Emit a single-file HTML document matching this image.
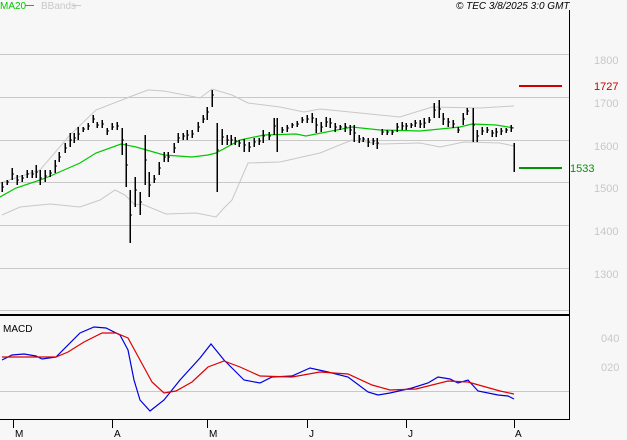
<!DOCTYPE html>
<html><head><style>
html,body{margin:0;padding:0;background:#f7f7f7;}
svg{display:block;}
text{font-family:"Liberation Sans",sans-serif;}
</style></head><body>
<svg width="627" height="440" viewBox="0 0 627 440" xmlns="http://www.w3.org/2000/svg" shape-rendering="crispEdges">
<rect width="627" height="440" fill="#f7f7f7"/>
<!-- header -->
<text x="0" y="9" font-size="10" fill="#00c800">MA20</text>
<line x1="25" y1="5.5" x2="34" y2="5.5" stroke="#00c800" stroke-width="1"/>
<text x="41" y="9" font-size="10" fill="#c8c8c8">BBands</text>
<line x1="73" y1="5.5" x2="81" y2="5.5" stroke="#c8c8c8"/>
<text x="456" y="9" font-size="10" font-style="italic" fill="#000">© TEC 3/8/2025 3:0 GMT</text>
<!-- grid -->
<g stroke="#c8c8c8" stroke-width="1">
<line x1="0" y1="54.5" x2="569" y2="54.5"/>
<line x1="0" y1="97.5" x2="569" y2="97.5"/>
<line x1="0" y1="140.5" x2="569" y2="140.5"/>
<line x1="0" y1="182.5" x2="569" y2="182.5"/>
<line x1="0" y1="225.5" x2="569" y2="225.5"/>
<line x1="0" y1="268.5" x2="569" y2="268.5"/>
<line x1="0" y1="310.5" x2="569" y2="310.5"/>
<line x1="0" y1="391.5" x2="569" y2="391.5"/>
</g>
<!-- axes -->
<line x1="569.5" y1="10" x2="569.5" y2="420" stroke="#000"/>
<rect x="0" y="314" width="570" height="2" fill="#000"/>
<line x1="0" y1="419.5" x2="570" y2="419.5" stroke="#000"/>
<g stroke="#000">
<line x1="13.5" y1="419" x2="13.5" y2="428"/>
<line x1="112.5" y1="419" x2="112.5" y2="428"/>
<line x1="207.5" y1="419" x2="207.5" y2="428"/>
<line x1="307.5" y1="419" x2="307.5" y2="428"/>
<line x1="406.5" y1="419" x2="406.5" y2="428"/>
<line x1="514.5" y1="419" x2="514.5" y2="428"/>
</g>
<g font-size="10" fill="#000">
<text x="15" y="437">M</text><text x="114" y="437">A</text><text x="209" y="437">M</text>
<text x="309" y="437">J</text><text x="408" y="437">J</text><text x="515" y="437">A</text>
</g>
<!-- price labels -->
<g font-size="11" fill="#c8c8c8">
<text x="594" y="64">1800</text><text x="594" y="107">1700</text><text x="594" y="150">1600</text>
<text x="594" y="192">1500</text><text x="594" y="235">1400</text><text x="594" y="278">1300</text>
<text x="601" y="342">040</text><text x="601" y="371">020</text>
</g>
<text x="594" y="90" font-size="11" fill="#c80000">1727</text>
<text x="570" y="172" font-size="11" fill="#009600">1533</text>
<rect x="519" y="85" width="43" height="2" fill="#d00000"/>
<rect x="519" y="167" width="43" height="2" fill="#009600"/>
<text x="3" y="332" font-size="10" fill="#000">MACD</text>
<!-- bbands -->
<g fill="none" stroke="#c8c8c8" stroke-width="1" shape-rendering="auto">
<polyline points="0,183 40,170 70,135 96,110 132,96 148,90 164,91 200,98 212,89 232,95 248,103 280,107 304,112 320,109 360,113 400,117 432,107 480,108 514,106"/>
<polyline points="2,215 20,207 50,204 80,207 100,200 115,190 125,195 135,205 142,204 166,214 196,213 216,217 224,208 232,200 248,163 280,162 320,153 352,140 380,144 420,143 440,147 464,142 500,143 514,146"/>
</g>
<!-- MA20 -->
<polyline fill="none" stroke="#00c800" stroke-width="1.2" shape-rendering="auto" points="0,197 16,188 40,180 48,177 80,163 96,153 121,144 136,147 164,155 192,157 208,155 216,153 240,140 264,135 296,134 306,136 352,127 380,130 420,131 440,129 460,127 472,124 496,125 514,128"/>
<!-- bars -->
<path fill="none" stroke="#000" stroke-width="1.5" d="
M2,182V192 M7,180V185 M12,168V180 M17,175V185 M22,175V182 M27,170V178 M32,170V178 M36,165V178 M40,170V185 M45,170V182 M50,170V177 M55,160V173 M59,152V162 M65,143V153 M70,133V147 M74,133V143 M78,127V140 M83,127V132 M88,123V130 M93,115V123 M97,122V128 M102,120V128 M107,128V135 M112,123V130 M117,122V130 M122,128V155 M126,143V187 M130,190V243 M135,177V207 M140,192V215 M145,135V185 M149,172V197 M154,175V183 M159,162V175 M164,152V162 M168,152V162 M174,143V153 M178,133V143 M183,133V140 M187,130V140 M192,130V138 M198,122V132 M203,115V123 M207,107V120 M212,90V107 M217,123V192 M222,129V145 M227,135V145 M231,135V145 M235,137V145 M239,140V147 M244,139V152 M249,142V152 M254,138V147 M259,138V145 M263,130V143 M269,132V140 M274,118V135 M277,118V152 M282,127V133 M287,125V132 M292,123V128 M297,121V127 M302,117V123 M307,115V123 M312,113V123 M316,118V133 M321,122V132 M326,117V127 M330,118V128 M335,123V132 M340,125V130 M345,123V132 M350,125V135 M354,125V142 M359,135V143 M363,137V142 M368,138V147 M373,138V145 M377,138V149 M382,129V135 M387,130V135 M392,130V135 M397,123V132 M402,122V130 M406,123V130 M411,123V128 M415,120V127 M420,120V128 M424,118V128 M429,117V123 M434,103V118 M439,100V118 M443,113V125 M448,118V127 M453,120V128 M458,127V133 M463,113V125 M467,108V115 M473,108V142 M477,130V142 M482,127V135 M487,127V133 M492,130V137 M496,128V137 M501,128V135 M506,128V133 M511,125V132 M514,143V172"/>
<path fill="none" stroke="#000" stroke-width="1" d="
M2,187h2 M7,182h2 M12,174h2 M17,180h2 M22,178h2 M27,174h2 M32,174h2 M36,172h2 M40,178h2 M45,176h2 M50,173h2 M55,166h2 M59,157h2 M65,148h2 M70,140h2 M74,138h2 M78,134h2 M83,129h2 M88,126h2 M93,119h2 M97,125h2 M102,124h2 M107,131h2 M112,127h2 M117,126h2 M122,140h2 M126,165h2 M130,215h2 M135,190h2 M140,202h2 M145,160h2 M149,185h2 M154,179h2 M159,168h2 M164,157h2 M168,157h2 M174,148h2 M178,138h2 M183,136h2 M187,135h2 M192,134h2 M198,127h2 M203,119h2 M207,112h2 M212,95h2 M217,150h2 M222,137h2 M227,140h2 M231,140h2 M235,141h2 M239,143h2 M244,145h2 M249,147h2 M254,142h2 M259,141h2 M263,136h2 M269,136h2 M274,126h2 M282,130h2 M287,128h2 M292,125h2 M297,124h2 M302,120h2 M307,119h2 M312,118h2 M316,125h2 M321,127h2 M326,122h2 M330,123h2 M335,127h2 M340,127h2 M345,127h2 M350,130h2 M354,133h2 M359,139h2 M363,139h2 M368,142h2 M373,141h2 M377,143h2 M382,132h2 M387,132h2 M392,132h2 M397,127h2 M402,126h2 M406,126h2 M411,125h2 M415,123h2 M420,124h2 M424,123h2 M429,120h2 M434,110h2 M439,109h2 M443,119h2 M448,122h2 M453,124h2 M458,130h2 M463,119h2 M467,111h2 M473,125h2 M477,136h2 M482,131h2 M487,130h2 M492,133h2 M496,132h2 M501,131h2 M506,130h2 M511,128h2"/>
<!-- MACD -->
<polyline fill="none" stroke="#0000e0" stroke-width="1.2" shape-rendering="auto" points="2,360 12,355 24,354 36,356 42,359 56,357 80,333 94,327 106,328 120,335 128,350 134,380 140,400 150,411 164,400 180,380 200,358 211,344 224,360 244,380 260,383 272,377 292,376 310,368 328,372 348,377 368,392 378,395 390,393 412,388 428,383 438,377 450,379 458,383 468,380 478,391 498,395 508,396 514,399"/>
<polyline fill="none" stroke="#e00000" stroke-width="1.2" shape-rendering="auto" points="2,357 40,357 56,357 68,352 84,342 102,333 116,333 128,338 140,360 152,382 164,393 176,391 192,382 208,367 224,361 240,367 260,376 292,377 320,372 348,374 372,385 390,390 416,389 448,381 468,382 500,391 514,394"/>
</svg>
</body></html>
